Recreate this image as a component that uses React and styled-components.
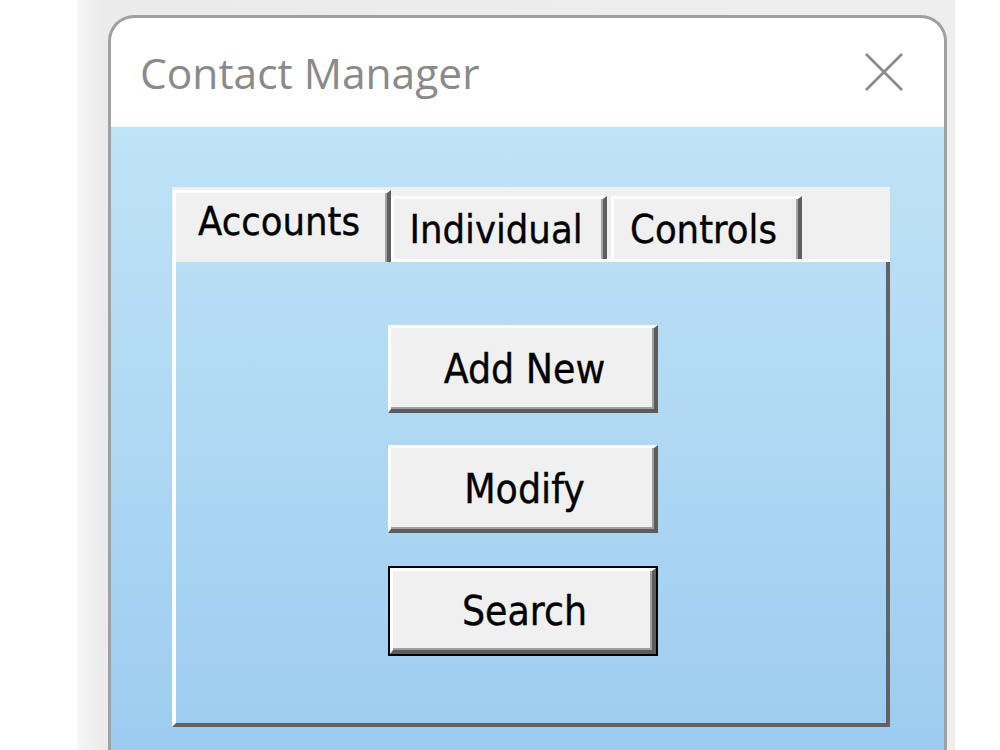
import React from "react";
import styled, { createGlobalStyle } from "styled-components";

const GlobalStyle = createGlobalStyle`
  html, body {
    margin: 0;
    padding: 0;
    background: #ffffff;
    overflow: hidden;
  }
`;

const Backdrop = styled.div`
  margin-left: 77px;
  width: 878px;
  height: 750px;
  padding: 15px 0 0 31px;
  box-sizing: border-box;
  background: linear-gradient(to right, #f6f6f6 0px, #ebebeb 25px, #eeeeee 100%);
  overflow: hidden;
`;

const Window = styled.div`
  width: 839px;
  height: 760px;
  box-sizing: border-box;
  border: 3px solid #a0a0a0;
  border-bottom: none;
  border-radius: 26px 26px 0 0;
  background: #ffffff;
  overflow: hidden;
  display: flex;
  flex-direction: column;
`;

const TitleBar = styled.div`
  height: 109px;
  flex-shrink: 0;
  display: flex;
  align-items: flex-start;
  justify-content: space-between;
  padding: 29px 40px 0 29px;
  box-sizing: border-box;
`;

const Title = styled.div`
  font-family: "Open Sans", "Noto Sans", sans-serif;
  font-size: 42.5px;
  line-height: 52px;
  color: #8a8a8a;
`;

const CloseButton = styled.div`
  width: 40px;
  height: 40px;
  margin-top: 5px;
  svg {
    display: block;
  }
`;

const Client = styled.div`
  flex: 1;
  background: linear-gradient(to bottom, #bfe3f7 0%, #b3dbf4 35%, #9ccbf0 100%);
  padding: 60px 0 0 61px;
`;

const TabControl = styled.div`
  width: 718px;
  display: flex;
  flex-direction: column;
  font-family: "DejaVu Sans Condensed", "DejaVu Sans", sans-serif;
  font-stretch: condensed;
  color: #000;
`;

const TabStrip = styled.div`
  height: 72px;
  background: #f0f0f0;
  border-bottom: 3px solid #ffffff;
  display: flex;
  align-items: flex-end;
  padding-left: 1px;
`;

const Tab = styled.div`
  box-sizing: border-box;
  height: ${(p) => (p.$active ? "72px" : "63px")};
  width: ${(p) => p.$w}px;
  margin-right: ${(p) => p.$gap || 0}px;
  margin-bottom: ${(p) => (p.$active ? "-3px" : "0")};
  background: #f0f0f0;
  border-top: 3px solid #ffffff;
  border-left: 3px solid #ffffff;
  border-right: 4px solid #5e5e5e;
  box-shadow: inset -2px 0 0 #a5a5a5;
  display: flex;
  justify-content: center;
  align-items: ${(p) => (p.$active ? "flex-start" : "center")};
  padding-top: ${(p) => (p.$active ? "6px" : "0")};
  padding-right: 5px;
  font-size: 39.5px;
  line-height: 44px;
  -webkit-text-stroke: 0.35px #000;
  position: relative;
  z-index: ${(p) => (p.$active ? 2 : 1)};
`;

const Panel = styled.div`
  height: 465px;
  box-sizing: border-box;
  border-left: 4px solid #ffffff;
  border-right: 4px solid #626262;
  border-bottom: 4px solid #626262;
  display: flex;
  flex-direction: column;
  gap: 32px;
  padding: 63px 0 0 212px;
`;

const Button = styled.button`
  box-sizing: border-box;
  width: ${(p) => (p.$default ? "266px" : "270px")};
  height: ${(p) => (p.$default ? "86px" : "88px")};
  margin: ${(p) => (p.$default ? "3px 0 0 2px" : "0")};
  padding: 0 0 0 4px;
  background: #f0f0f0;
  border-top: 3px solid #ffffff;
  border-left: 3px solid #ffffff;
  border-right: 4px solid #5c5c5c;
  border-bottom: 4px solid #5c5c5c;
  box-shadow: inset -2px -2px 0 #a0a0a0;
  outline: ${(p) => (p.$default ? "2px solid #000" : "none")};
  font-family: "DejaVu Sans Condensed", "DejaVu Sans", sans-serif;
  font-stretch: condensed;
  font-size: 40.5px;
  -webkit-text-stroke: 0.35px #000;
  color: #000;
  display: flex;
  align-items: center;
  justify-content: center;
`;

const tabs = [
  { label: "Accounts", w: 218, active: true },
  { label: "Individual", w: 216, gap: 4 },
  { label: "Controls", w: 191 },
];

export default function App() {
  return (
    <>
      <GlobalStyle />
      <Backdrop>
        <Window>
          <TitleBar>
            <Title>Contact Manager</Title>
            <CloseButton>
              <svg width="40" height="40" viewBox="0 0 40 40">
                <path d="M2 2 L38 38 M38 2 L2 38" stroke="#8a8a8a" strokeWidth="2.6" fill="none" />
              </svg>
            </CloseButton>
          </TitleBar>
          <Client>
            <TabControl>
              <TabStrip>
                {tabs.map((t) => (
                  <Tab key={t.label} $active={t.active} $w={t.w} $gap={t.gap}>
                    {t.label}
                  </Tab>
                ))}
              </TabStrip>
              <Panel>
                <Button>Add New</Button>
                <Button>Modify</Button>
                <Button $default>Search</Button>
              </Panel>
            </TabControl>
          </Client>
        </Window>
      </Backdrop>
    </>
  );
}
